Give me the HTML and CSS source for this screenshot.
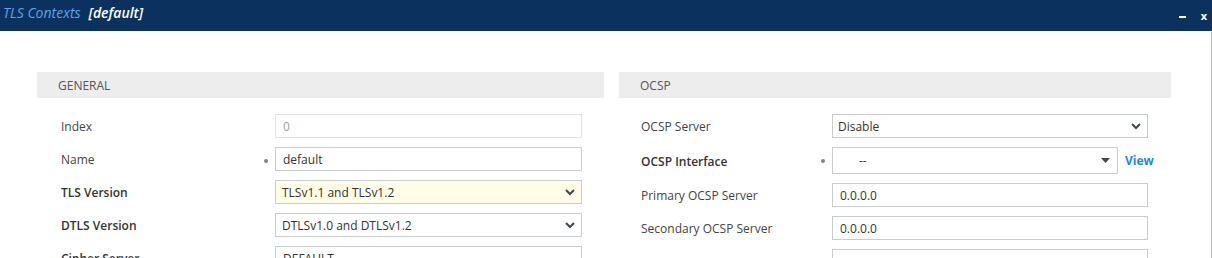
FILE: index.html
```html
<!DOCTYPE html>
<html>
<head>
    <title>TLS Contexts</title>
    <link rel="stylesheet" href="styles.css">
</head>
<body>
    <div class="titlebar">
        <div class="title"><span class="title-name">TLS Contexts</span><span class="title-key">[default]</span></div>
        <div class="win-buttons">
            <span class="win-min"></span>
            <span class="win-close">x</span>
        </div>
    </div>

    <div class="content">
        <div class="panel panel-general">
            <div class="section-head">GENERAL</div>
            <div class="rows">
                <div class="row">
                    <div class="label">Index</div>
                    <div class="field"><div class="input disabled">0</div></div>
                </div>
                <div class="row">
                    <div class="label">Name</div>
                    <div class="field"><span class="dot"></span><div class="input">default</div></div>
                </div>
                <div class="row">
                    <div class="label strong">TLS Version</div>
                    <div class="field">
                        <div class="input select changed">TLSv1.1 and TLSv1.2
                            <svg class="chevron" width="10" height="7" viewBox="0 0 10 7"><polyline points="1,1 5,5 9,1" fill="none" stroke="#3f4750" stroke-width="2"/></svg>
                        </div>
                    </div>
                </div>
                <div class="row">
                    <div class="label strong">DTLS Version</div>
                    <div class="field">
                        <div class="input select">DTLSv1.0 and DTLSv1.2
                            <svg class="chevron" width="10" height="7" viewBox="0 0 10 7"><polyline points="1,1 5,5 9,1" fill="none" stroke="#3f4750" stroke-width="2"/></svg>
                        </div>
                    </div>
                </div>
                <div class="row">
                    <div class="label strong">Cipher Server</div>
                    <div class="field"><div class="input">DEFAULT</div></div>
                </div>
            </div>
        </div>

        <div class="panel panel-ocsp">
            <div class="section-head">OCSP</div>
            <div class="rows">
                <div class="row">
                    <div class="label">OCSP Server</div>
                    <div class="field">
                        <div class="input select tight">Disable
                            <svg class="chevron" width="10" height="7" viewBox="0 0 10 7"><polyline points="1,1 5,5 9,1" fill="none" stroke="#3f4750" stroke-width="2"/></svg>
                        </div>
                    </div>
                </div>
                <div class="row tall">
                    <div class="label strong">OCSP Interface</div>
                    <div class="field">
                        <span class="dot"></span>
                        <div class="input select short"><span class="dashes">--</span>
                            <svg class="caret" width="9" height="5" viewBox="0 0 9 5"><polygon points="0,0 9,0 4.5,5" fill="#3f4750"/></svg>
                        </div>
                        <a class="view-link">View</a>
                    </div>
                </div>
                <div class="row">
                    <div class="label">Primary OCSP Server</div>
                    <div class="field"><div class="input">0.0.0.0</div></div>
                </div>
                <div class="row">
                    <div class="label">Secondary OCSP Server</div>
                    <div class="field"><div class="input">0.0.0.0</div></div>
                </div>
                <div class="row">
                    <div class="label"></div>
                    <div class="field"><div class="input"></div></div>
                </div>
            </div>
        </div>
    </div>
</body>
</html>
```

FILE: styles.css
```css
body {
    margin: 0;
    font-family: "Open Sans", Arial, sans-serif;
    font-size: 12px;
    color: #444;
    height: 258px;
    overflow: hidden;
    background: #fff;
}
.titlebar {
    height: 31px;
    background: #0b325e;
    display: flex;
    justify-content: space-between;
    align-items: center;
}
.title {
    padding-left: 3px;
    font-size: 14px;
    font-style: italic;
    margin-top: -6px;
}
.title-name {
    color: #5ea3ea;
}
.title-key {
    color: #fff;
    font-weight: 600;
    margin-left: 8px;
}
.win-buttons {
    display: flex;
    align-items: center;
    gap: 15px;
    padding-right: 5px;
    margin-top: 2px;
}
.win-min {
    width: 7px;
    height: 2px;
    background: #fff;
    margin-top: 1px;
}
.win-close {
    color: #fff;
    font-weight: 700;
    font-size: 11px;
    margin-top: -2px;
}
.content {
    display: flex;
    gap: 15px;
    padding: 41px 0 0 37px;
    height: 227px;
    border-right: 1px solid #b9b9b9;
    box-sizing: border-box;
}
.panel-general {
    width: 567px;
}
.panel-ocsp {
    width: 552px;
}
.section-head {
    height: 26px;
    line-height: 27px;
    background: #ededed;
    padding-left: 21px;
    color: #555;
    font-size: 12px;
}
.rows {
    display: flex;
    flex-direction: column;
    gap: 9px;
    padding-top: 16px;
}
.row {
    display: flex;
    align-items: center;
    height: 24px;
}
.row.tall {
    height: 27px;
}
.label {
    padding-top: 1px;
}
.panel-general .label {
    width: 214px;
    padding-left: 24px;
}
.panel-ocsp .label {
    width: 191px;
    padding-left: 22px;
    white-space: nowrap;
    overflow: hidden;
}
.label.strong {
    font-weight: 600;
    color: #333;
}
.field {
    position: relative;
    display: flex;
    align-items: center;
    height: 100%;
}
.dot {
    position: absolute;
    left: -11px;
    top: 12px;
    width: 4px;
    height: 4px;
    border-radius: 50%;
    background: #7d8690;
}
.input {
    box-sizing: border-box;
    height: 100%;
    border: 1px solid #c7ccd1;
    display: flex;
    align-items: center;
    padding-left: 7px;
    color: #333;
    background: #fff;
}
.panel-general .input {
    width: 307px;
}
.panel-ocsp .input {
    width: 316px;
}
.panel-ocsp .input.short {
    width: 286px;
}
.input.disabled {
    border-color: #e1e4e7;
    color: #a3a3a3;
}
.input.select {
    justify-content: space-between;
    padding-left: 6px;
    padding-right: 6px;
}
.input.tight {
    padding-left: 5px;
}
.input.changed {
    background: #fffde7;
}
.dashes {
    padding-left: 20px;
}
.caret {
    margin-right: 1px;
}
.view-link {
    margin-left: 7px;
    color: #1e88e5;
    font-weight: 700;
    font-size: 12px;
    cursor: pointer;
}
```
